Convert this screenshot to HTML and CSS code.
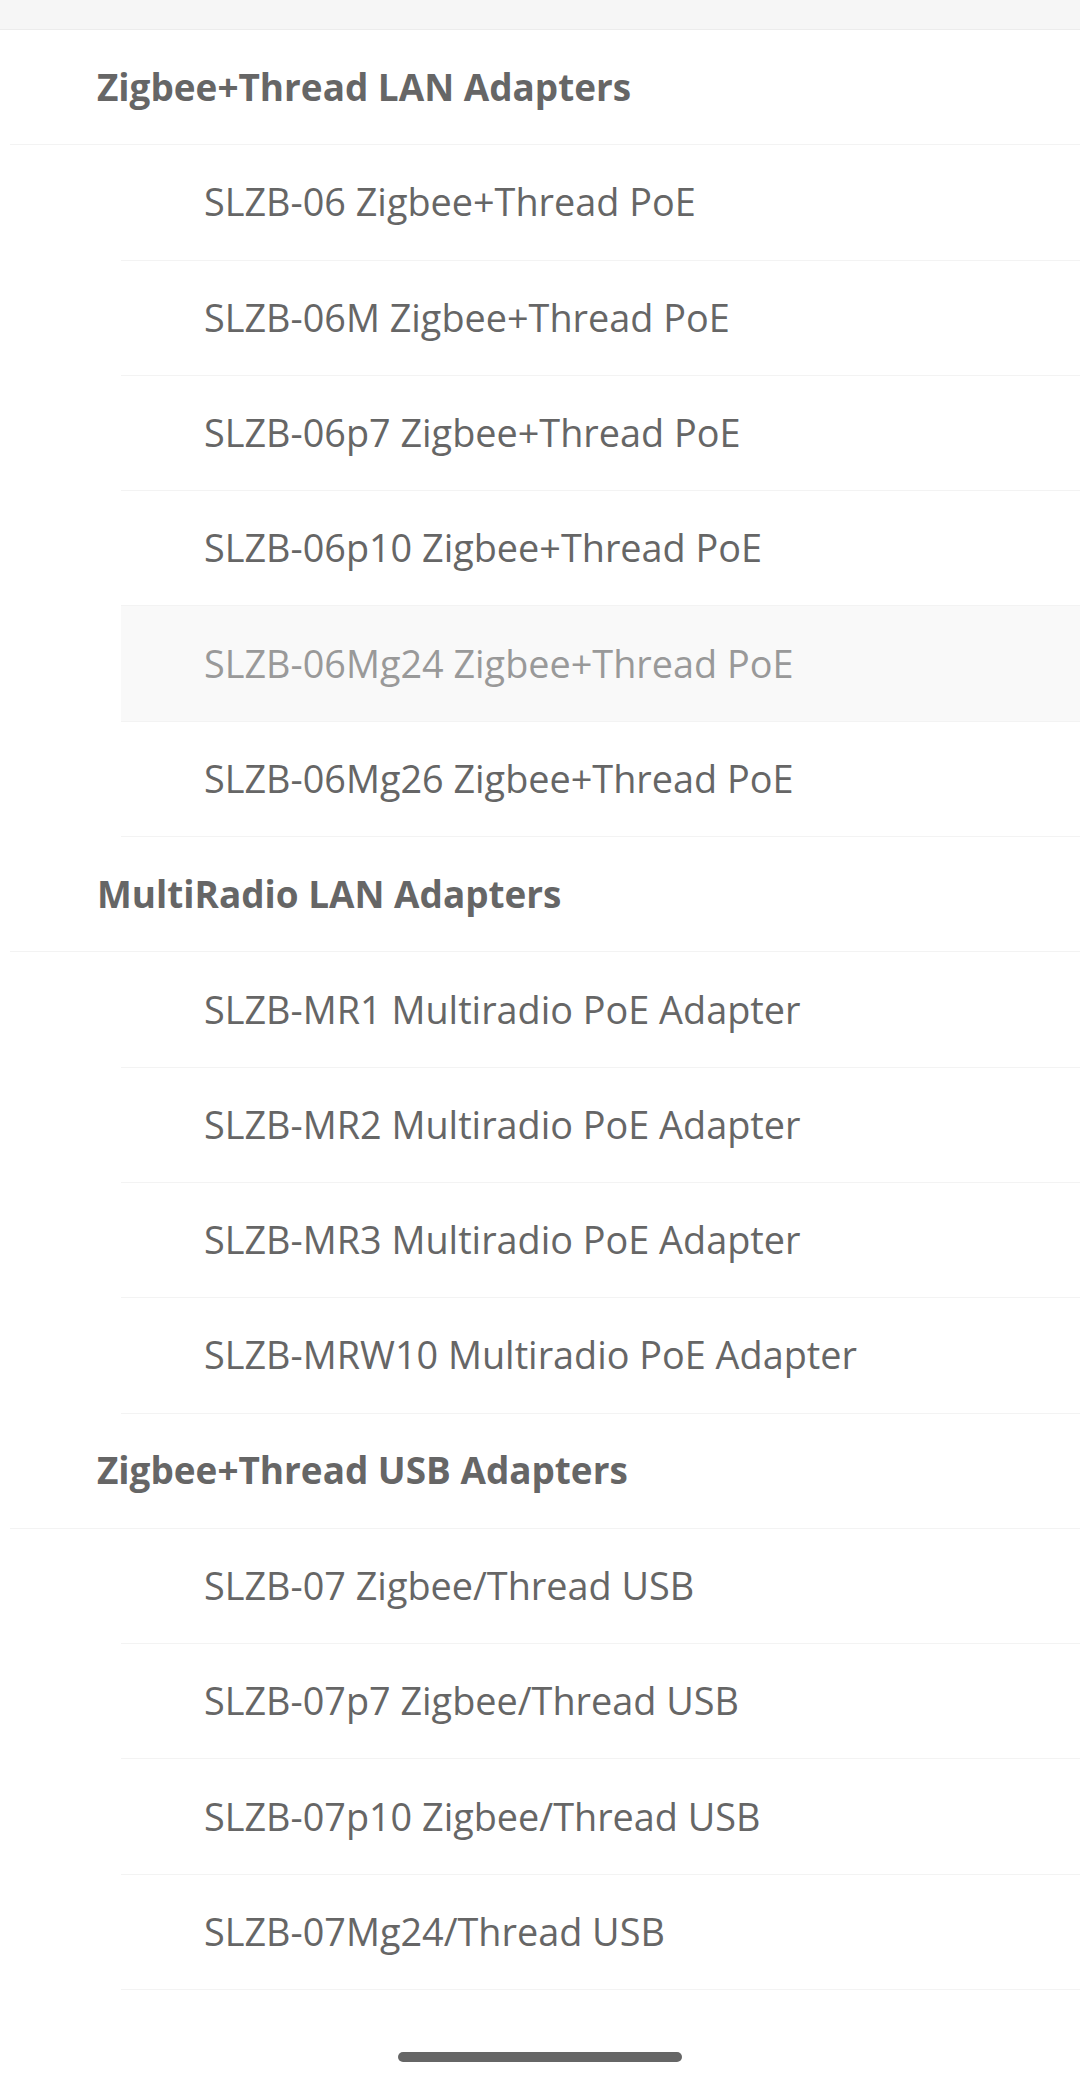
FILE: index.html
```html
<!DOCTYPE html>
<html lang="en">
<head>
<meta charset="utf-8">
<title>Adapters</title>
<link rel="stylesheet" href="styles.css">
</head>
<body>
<div class="topbar"></div>
<ul class="menu">
  <li class="group">Zigbee+Thread LAN Adapters</li>
  <li class="item">SLZB-06 Zigbee+Thread PoE</li>
  <li class="item">SLZB-06M Zigbee+Thread PoE</li>
  <li class="item">SLZB-06p7 Zigbee+Thread PoE</li>
  <li class="item">SLZB-06p10 Zigbee+Thread PoE</li>
  <li class="item active">SLZB-06Mg24 Zigbee+Thread PoE</li>
  <li class="item">SLZB-06Mg26 Zigbee+Thread PoE</li>
  <li class="group">MultiRadio LAN Adapters</li>
  <li class="item">SLZB-MR1 Multiradio PoE Adapter</li>
  <li class="item">SLZB-MR2 Multiradio PoE Adapter</li>
  <li class="item">SLZB-MR3 Multiradio PoE Adapter</li>
  <li class="item">SLZB-MRW10 Multiradio PoE Adapter</li>
  <li class="group">Zigbee+Thread USB Adapters</li>
  <li class="item">SLZB-07 Zigbee/Thread USB</li>
  <li class="item">SLZB-07p7 Zigbee/Thread USB</li>
  <li class="item">SLZB-07p10 Zigbee/Thread USB</li>
  <li class="item">SLZB-07Mg24/Thread USB</li>
</ul>
<div class="homebar"><span class="handle"></span></div>
</body>
</html>
```
FILE: styles.css
```css
html, body {
  margin: 0;
  padding: 0;
  background: #ffffff;
}
body {
  font-family: "Open Sans", "Noto Sans", sans-serif;
  color: #666666;
  width: 1080px;
  overflow: hidden;
}
.topbar {
  height: 29px;
  background: #f6f6f6;
  border-bottom: 1px solid #ececec;
}
.menu {
  list-style: none;
  margin: 0;
  padding: 0;
}
.menu li {
  box-sizing: border-box;
  height: 115.3px;
  display: flex;
  align-items: center;
  border-bottom: 1px solid #f3f3f3;
  white-space: nowrap;
}
.group {
  margin-left: 10px;
  padding-left: 87px;
  font-size: 36.9px;
  font-weight: 700;
  padding-bottom: 1px;
}
.item {
  margin-left: 121px;
  padding-left: 83px;
  font-size: 37.8px;
  font-weight: 400;
  padding-bottom: 1px;
}
.item.active {
  background: #f9f9f9;
  color: #999999;
}
.homebar {
  display: flex;
  justify-content: center;
  padding-top: 62px;
}
.handle {
  display: block;
  width: 284px;
  height: 10px;
  border-radius: 5px;
  background: #666666;
}
```
